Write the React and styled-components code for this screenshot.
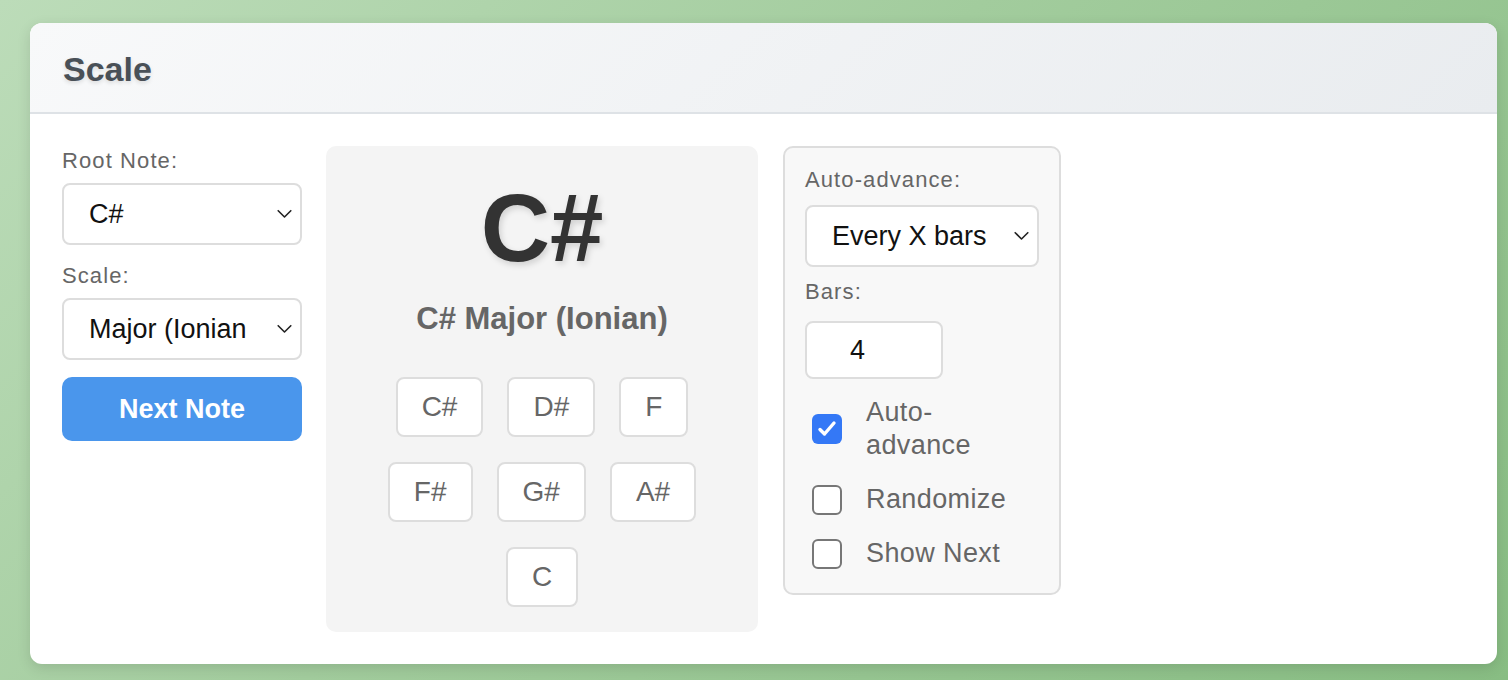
import React, { useState } from 'react';
import styled, { createGlobalStyle } from 'styled-components';

const GlobalStyle = createGlobalStyle`
    html, body {
        margin: 0;
        padding: 0;
    }
    body {
        font-family: "Liberation Sans", Arial, sans-serif;
        background: linear-gradient(135deg, #bcdcb9 0%, #a2cc9d 45%, #88bd83 100%);
        min-height: 100vh;
    }
    * { box-sizing: border-box; }
`;

const Page = styled.div`
    min-height: 100vh;
    padding: 23px 11px 16px 30px;
`;

const Card = styled.div`
    background: #fff;
    border-radius: 12px;
    overflow: hidden;
    box-shadow: 0 4px 14px rgba(0, 0, 0, 0.12);
`;

const Header = styled.div`
    height: 91px;
    display: flex;
    align-items: center;
    padding: 3px 33px 0;
    background: linear-gradient(135deg, #f8f9fa 0%, #e9ecef 100%);
    border-bottom: 2px solid #dee2e6;
`;

const Title = styled.h2`
    margin: 0;
    font-size: 34px;
    font-weight: 700;
    color: #495057;
    text-shadow: 0 2px 4px rgba(0, 0, 0, 0.12);
`;

const Body = styled.div`
    display: flex;
    align-items: flex-start;
    padding: 32px 33px 32px 32px;
`;

const LeftCol = styled.div`
    width: 240px;
    display: flex;
    flex-direction: column;
    padding-top: 2px;
    margin-right: 24px;
`;

const FieldLabel = styled.label`
    display: block;
    font-size: 22px;
    line-height: 26px;
    letter-spacing: 1.1px;
    color: #666;
    margin-bottom: ${p => p.$gap || 9}px;
`;

const SelectWrap = styled.div`
    position: relative;
    margin-bottom: ${p => p.$after || 0}px;
`;

const Select = styled.select`
    appearance: none;
    -webkit-appearance: none;
    width: 100%;
    height: 62px;
    border: 2px solid #ddd;
    border-radius: 8px;
    background: #fff;
    padding: 0 ${p => p.$padRight || 54}px 0 25px;
    font-family: "Liberation Sans", Arial, sans-serif;
    font-size: 27px;
    color: #111;
    outline: none;
`;

const Chevron = styled.svg`
    position: absolute;
    right: 10px;
    top: 50%;
    transform: translateY(-50%);
    pointer-events: none;
`;

const NextButton = styled.button`
    height: 64px;
    border: none;
    border-radius: 10px;
    background: #4a96ec;
    color: #fff;
    font-family: "Liberation Sans", Arial, sans-serif;
    font-size: 27px;
    font-weight: 700;
    cursor: pointer;
`;

const NotePanel = styled.div`
    width: 432px;
    background: #f4f4f4;
    border-radius: 10px;
    padding: 34px 24px 25px;
    display: flex;
    flex-direction: column;
    align-items: center;
    margin-right: 25px;
`;

const BigNote = styled.div`
    font-size: 96px;
    line-height: 96px;
    font-weight: 700;
    color: #333;
    text-shadow: 2px 3px 6px rgba(0, 0, 0, 0.15);
    margin-bottom: 24px;
`;

const ScaleName = styled.div`
    font-size: 31px;
    line-height: 37px;
    font-weight: 700;
    color: #666;
    margin-bottom: 40px;
`;

const Chips = styled.div`
    max-width: 330px;
    display: flex;
    flex-wrap: wrap;
    justify-content: center;
    gap: 25px 24px;
`;

const Chip = styled.div`
    height: 60px;
    padding: 0 24px;
    display: flex;
    align-items: center;
    background: #fff;
    border: 2px solid #ddd;
    border-radius: 8px;
    font-size: 28px;
    color: #666;
`;

const SettingsPanel = styled.div`
    width: 278px;
    background: #f8f8f8;
    border: 2px solid #ddd;
    border-radius: 10px;
    padding: 19px 20px 23px;
`;

const NumberInput = styled.input`
    width: 138px;
    height: 58px;
    border: 2px solid #ddd;
    border-radius: 8px;
    background: #fff;
    padding: 0 0 0 43px;
    font-family: "Liberation Sans", Arial, sans-serif;
    font-size: 27px;
    color: #111;
    outline: none;
    margin-bottom: 17px;
`;

const CheckList = styled.div`
    display: flex;
    flex-direction: column;
    gap: 21px;
`;

const CheckRow = styled.label`
    display: flex;
    align-items: center;
    gap: 24px;
    padding-left: 7px;
    cursor: pointer;
`;

const Box = styled.span`
    width: 30px;
    height: 30px;
    flex: none;
    border-radius: 6px;
    display: flex;
    align-items: center;
    justify-content: center;
    background: ${p => (p.$on ? '#3478f6' : '#fff')};
    border: ${p => (p.$on ? 'none' : '2px solid #777')};
`;

const CheckText = styled.span`
    max-width: 150px;
    font-size: 27px;
    line-height: 33px;
    letter-spacing: 0.4px;
    color: #666;
`;

const ChevronIcon = () => (
    <Chevron width="15" height="9" viewBox="0 0 15 9">
        <path d="M1.2 1.2l6.3 6.3 6.3-6.3" fill="none" stroke="#222" strokeWidth="1.6" strokeLinecap="round" strokeLinejoin="round" />
    </Chevron>
);

const notes = ['C#', 'D#', 'F', 'F#', 'G#', 'A#', 'C'];

const Check = ({ on, label, onToggle }) => (
    <CheckRow onClick={onToggle}>
        <Box $on={on}>
            {on && (
                <svg width="24" height="24" viewBox="0 0 24 24">
                    <path d="M5 12.5l4.5 4.5 9.5-11" fill="none" stroke="#fff" strokeWidth="3.4" strokeLinecap="round" strokeLinejoin="round" />
                </svg>
            )}
        </Box>
        <CheckText>{label}</CheckText>
    </CheckRow>
);

export default function App() {
    const [opts, setOpts] = useState({ auto: true, random: false, showNext: false });
    const toggle = key => setOpts(o => ({ ...o, [key]: !o[key] }));

    return (
        <Page>
            <GlobalStyle />
            <Card>
                <Header>
                    <Title>Scale</Title>
                </Header>
                <Body>
                    <LeftCol>
                        <FieldLabel>Root Note:</FieldLabel>
                        <SelectWrap $after={18}>
                            <Select defaultValue="C#">
                                {['C', 'C#', 'D', 'D#', 'E', 'F', 'F#', 'G', 'G#', 'A', 'A#', 'B'].map(n => (
                                    <option key={n} value={n}>{n}</option>
                                ))}
                            </Select>
                            <ChevronIcon />
                        </SelectWrap>
                        <FieldLabel>Scale:</FieldLabel>
                        <SelectWrap $after={17}>
                            <Select defaultValue="major">
                                <option value="major">Major (Ionian)</option>
                                <option value="minor">Minor (Aeolian)</option>
                            </Select>
                            <ChevronIcon />
                        </SelectWrap>
                        <NextButton>Next Note</NextButton>
                    </LeftCol>

                    <NotePanel>
                        <BigNote>C#</BigNote>
                        <ScaleName>C# Major (Ionian)</ScaleName>
                        <Chips>
                            {notes.map(n => (
                                <Chip key={n}>{n}</Chip>
                            ))}
                        </Chips>
                    </NotePanel>

                    <SettingsPanel>
                        <FieldLabel $gap={12}>Auto-advance:</FieldLabel>
                        <SelectWrap $after={12}>
                            <Select defaultValue="bars" $padRight={36}>
                                <option value="bars">Every X bars</option>
                                <option value="off">Off</option>
                            </Select>
                            <ChevronIcon />
                        </SelectWrap>
                        <FieldLabel $gap={16}>Bars:</FieldLabel>
                        <NumberInput type="text" defaultValue="4" />
                        <CheckList>
                            <Check on={opts.auto} label="Auto-advance" onToggle={() => toggle('auto')} />
                            <Check on={opts.random} label="Randomize" onToggle={() => toggle('random')} />
                            <Check on={opts.showNext} label="Show Next" onToggle={() => toggle('showNext')} />
                        </CheckList>
                    </SettingsPanel>
                </Body>
            </Card>
        </Page>
    );
}
